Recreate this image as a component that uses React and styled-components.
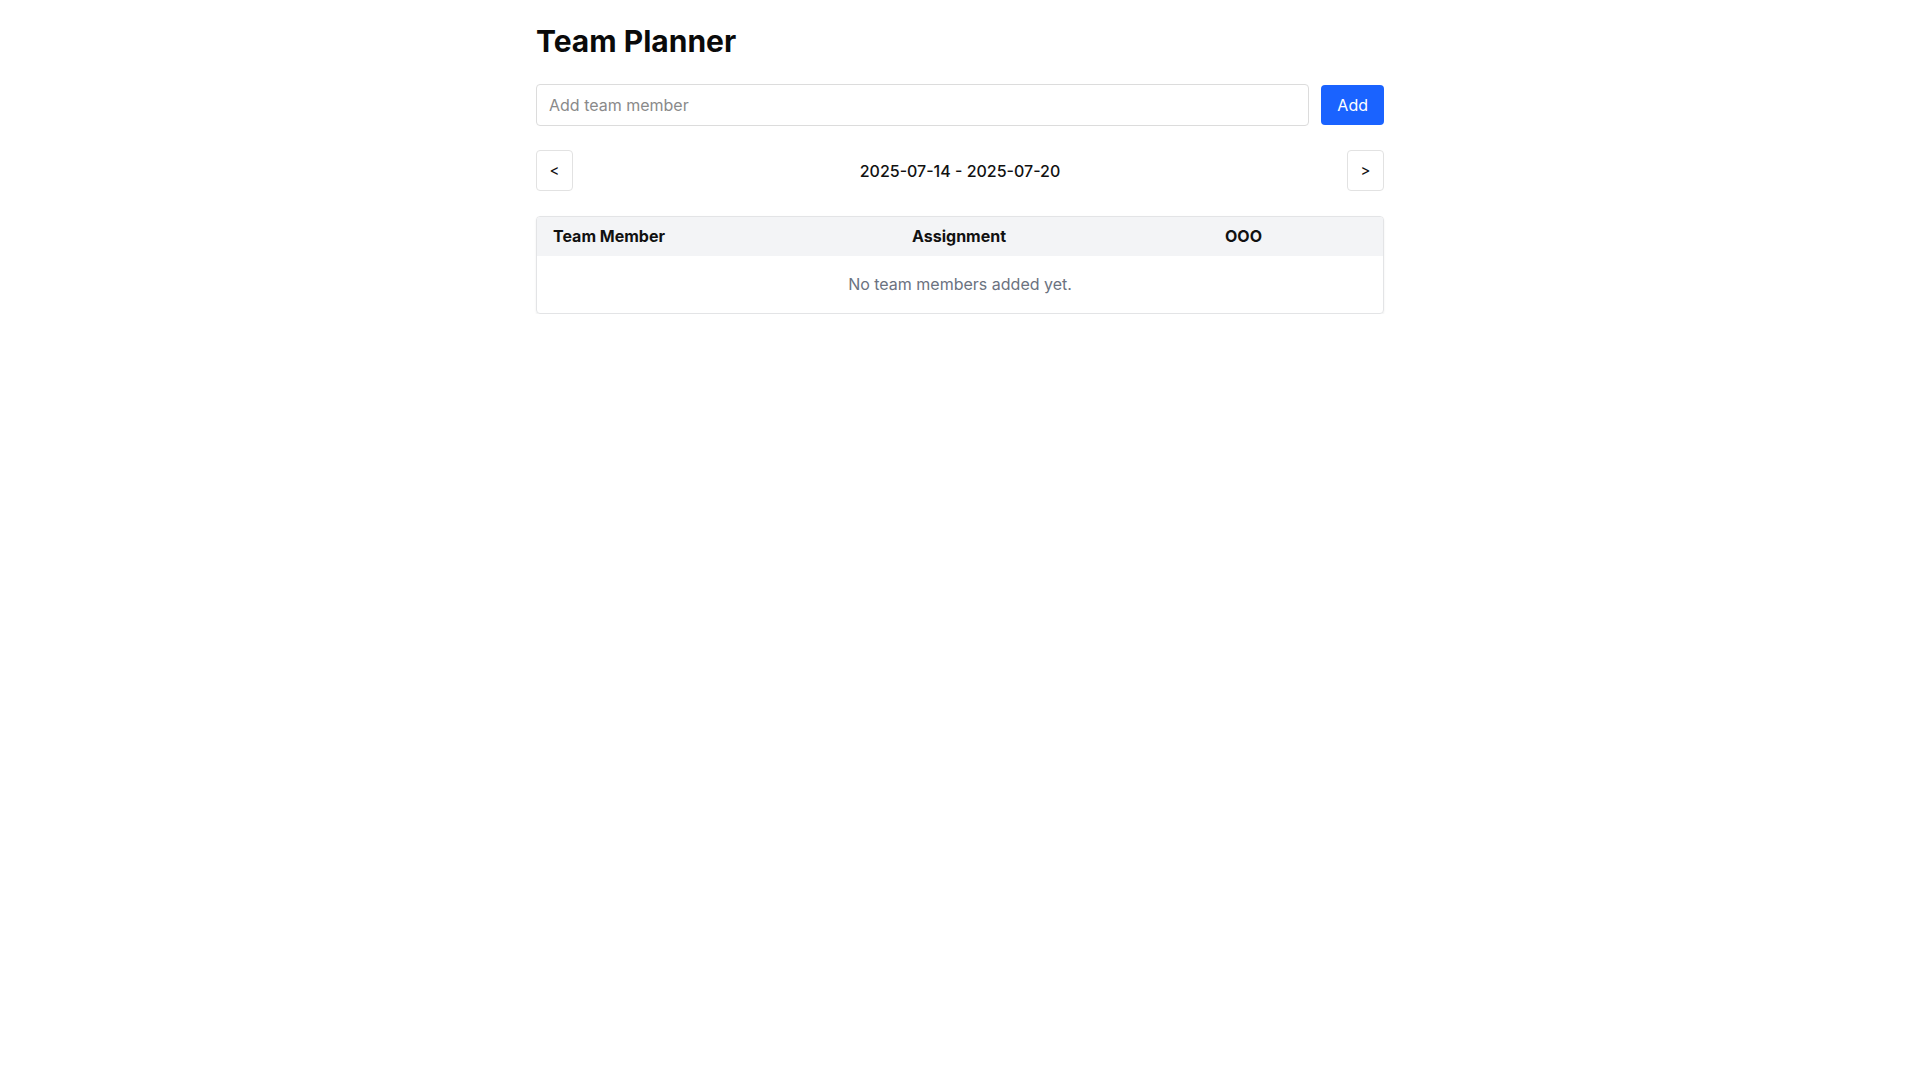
import React, { useState } from "react";
import styled, { createGlobalStyle } from "styled-components";

const GlobalStyle = createGlobalStyle`
  html, body {
    margin: 0;
    padding: 0;
    background: #ffffff;
    font-family: Inter, "Noto Sans", "Liberation Sans", sans-serif;
    color: #111111;
  }
  * {
    box-sizing: border-box;
  }
`;

const Page = styled.div`
  width: 848px;
  margin: 0 auto;
  padding-top: 22px;
  display: flex;
  flex-direction: column;
  gap: 24px;
`;

const Title = styled.h1`
  margin: 0;
  font-size: 30px;
  line-height: 38px;
  font-weight: 700;
  color: #0a0a0a;
`;

const AddRow = styled.div`
  display: flex;
  align-items: center;
  gap: 12px;
`;

const MemberInput = styled.input`
  flex: 1;
  height: 42px;
  padding: 8px 12px;
  font-family: inherit;
  font-size: 16px;
  color: #111;
  border: 1px solid #dcdcdc;
  border-radius: 4px;
  outline: none;

  &::placeholder {
    color: #8a8a8a;
  }
`;

const AddButton = styled.button`
  height: 40px;
  padding: 0 16px;
  background: #1a63ff;
  color: #ffffff;
  border: none;
  border-radius: 4px;
  font-family: inherit;
  font-size: 16px;
  cursor: pointer;
`;

const WeekRow = styled.div`
  display: flex;
  align-items: center;
  justify-content: space-between;
`;

const NavButton = styled.button`
  height: 41px;
  width: 37px;
  padding: 0;
  background: #ffffff;
  border: 1px solid #e2e2e2;
  border-radius: 4px;
  font-family: inherit;
  font-size: 15px;
  color: #111;
  cursor: pointer;
`;

const WeekLabel = styled.span`
  font-size: 16px;
  font-weight: 500;
  color: #111;
`;

const Table = styled.div`
  margin-top: 1px;
  border: 1px solid #e3e4e6;
  border-radius: 4px;
  overflow: hidden;
  box-shadow: 0 1px 2px rgba(0, 0, 0, 0.08);
`;

const HeaderRow = styled.div`
  display: grid;
  grid-template-columns: 359px 313px 1fr;
  background: #f3f4f6;
`;

const HeaderCell = styled.div`
  padding: 8px 16px;
  font-size: 16px;
  line-height: 23px;
  font-weight: 700;
  color: #111;
`;

const EmptyRow = styled.div`
  padding: 16px 16px 17px;
  text-align: center;
  font-size: 16px;
  line-height: 24px;
  color: #6b7280;
`;

export default function App() {
  const [name, setName] = useState("");

  return (
    <>
      <GlobalStyle />
      <Page>
        <Title>Team Planner</Title>
        <AddRow>
          <MemberInput
            placeholder="Add team member"
            value={name}
            onChange={(e) => setName(e.target.value)}
          />
          <AddButton>Add</AddButton>
        </AddRow>
        <WeekRow>
          <NavButton>&lt;</NavButton>
          <WeekLabel>2025-07-14 - 2025-07-20</WeekLabel>
          <NavButton>&gt;</NavButton>
        </WeekRow>
        <Table>
          <HeaderRow>
            <HeaderCell>Team Member</HeaderCell>
            <HeaderCell>Assignment</HeaderCell>
            <HeaderCell>OOO</HeaderCell>
          </HeaderRow>
          <EmptyRow>No team members added yet.</EmptyRow>
        </Table>
      </Page>
    </>
  );
}
